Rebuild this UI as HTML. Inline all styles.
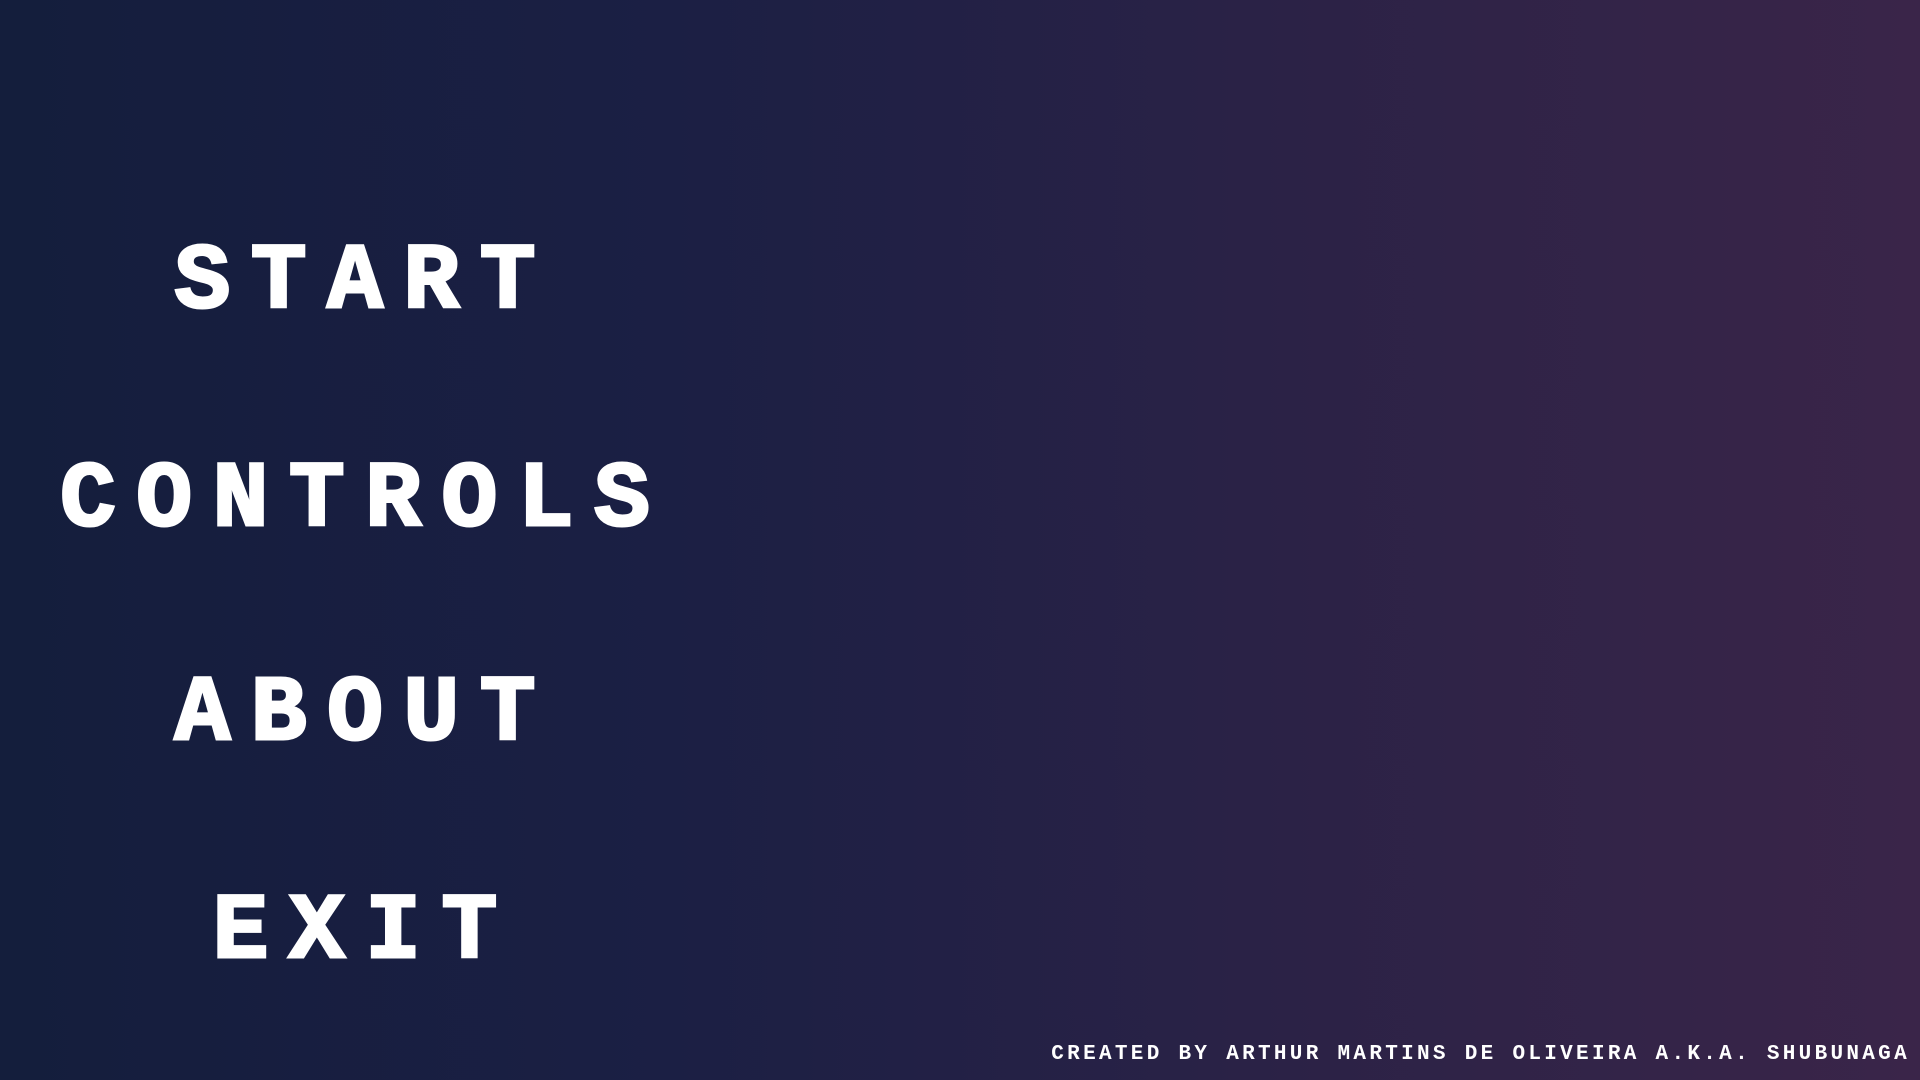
<!DOCTYPE html>
<html><head><meta charset="utf-8"><style>
html,body{margin:0;padding:0}
body{width:1920px;height:1080px;overflow:hidden;position:relative;
background:linear-gradient(90deg,#141e3c 0%,#1b1f44 35%,#2a2246 65%,#3a2549 100%);
font-family:"Liberation Mono",monospace;color:#fff}
.m{position:absolute;left:0;width:710px;text-align:center;font-weight:bold;font-size:93px;letter-spacing:20.5px;padding-left:20.5px;box-sizing:border-box;line-height:1;-webkit-text-stroke:3px #fff}
.f{position:absolute;right:10px;top:1044px;font-size:21px;font-weight:bold;letter-spacing:3.3px;white-space:nowrap;line-height:1}
</style></head><body>
<div class="m" style="top:236px">START</div>
<div class="m" style="top:454px">CONTROLS</div>
<div class="m" style="top:668px">ABOUT</div>
<div class="m" style="top:886px">EXIT</div>
<div class="f">CREATED BY ARTHUR MARTINS DE OLIVEIRA A.K.A. SHUBUNAGA</div>
</body></html>
